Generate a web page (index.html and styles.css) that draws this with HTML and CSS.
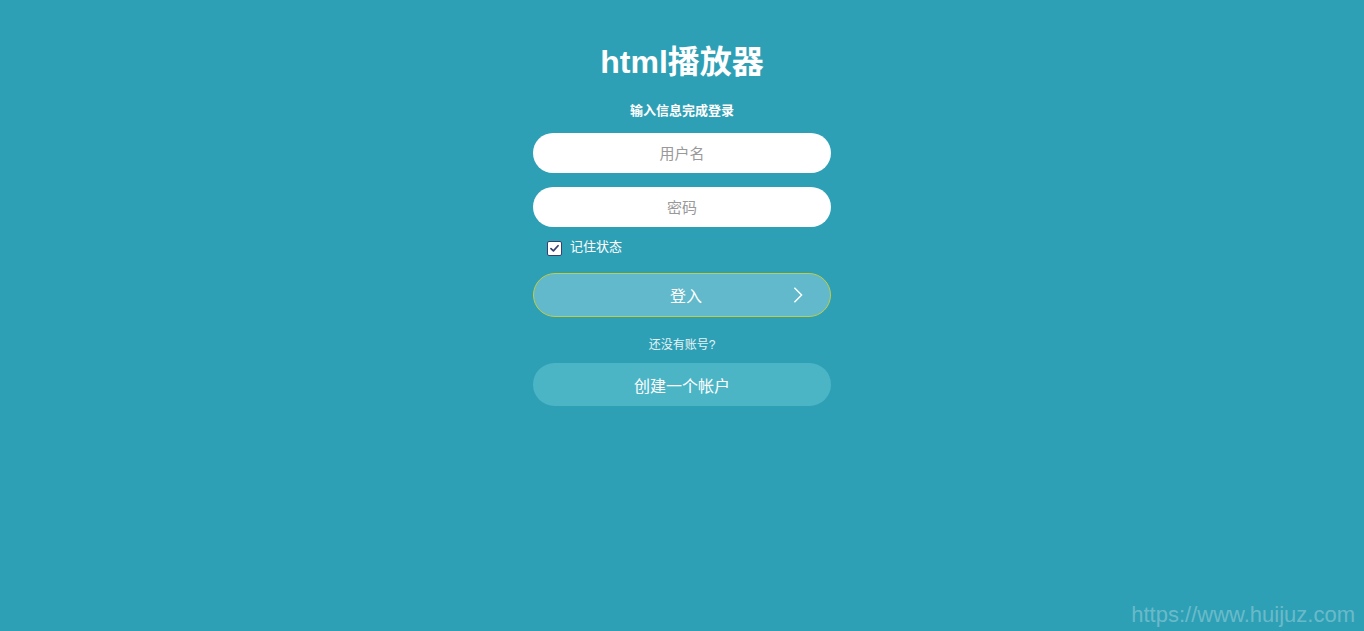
FILE: index.html
```html
<!DOCTYPE html>
<html lang="zh">
<head>
<meta charset="utf-8">
<title>html播放器</title>
<link rel="stylesheet" href="styles.css">
</head>
<body>
<main class="login">
  <h1 class="title">html播放器</h1>
  <p class="subtitle">输入信息完成登录</p>
  <form class="form">
    <input class="field" type="text" placeholder="用户名">
    <input class="field" type="password" placeholder="密码">
    <label class="remember">
      <span class="check"><svg viewBox="0 0 14 14" width="11" height="11"><path d="M2.5 7.2 L5.6 10 L11.5 3.5" fill="none" stroke="#3a3f6e" stroke-width="2.2" stroke-linecap="round" stroke-linejoin="round"/></svg></span>
      <span>记住状态</span>
    </label>
    <button class="btn-login" type="button">
      <span>登入</span>
      <svg class="arrow" viewBox="0 0 12 20" width="12" height="18"><path d="M2 2 L10 10 L2 18" fill="none" stroke="#ffffff" stroke-width="1.6"/></svg>
    </button>
    <p class="noacc">还没有账号?</p>
    <button class="btn-create" type="button">创建一个帐户</button>
  </form>
</main>
<div class="watermark">https://www.huijuz.com</div>
</body>
</html>
```

FILE: styles.css
```css
html, body {
  margin: 0;
  height: 100%;
}
body {
  background: #2ea0b5;
  font-family: "Liberation Sans", Arial, "Noto Sans CJK SC", sans-serif;
  color: #fff;
  overflow: hidden;
}
.login {
  width: 298px;
  margin: 0 auto;
  padding-top: 41px;
  display: flex;
  flex-direction: column;
  align-items: center;
}
.title {
  margin: 0;
  font-size: 32px;
  font-weight: bold;
  line-height: 42px;
  letter-spacing: 0;
}
.subtitle {
  margin: 20px 0 0;
  font-size: 13px;
  font-weight: bold;
  line-height: 16px;
}
.form {
  width: 100%;
  margin-top: 14px;
  display: flex;
  flex-direction: column;
}
.field {
  box-sizing: border-box;
  width: 100%;
  height: 40px;
  border: none;
  border-radius: 20px;
  background: #fff;
  text-align: center;
  font-family: inherit;
  font-size: 15px;
  color: #555;
  outline: none;
  margin-bottom: 14px;
}
.field::placeholder {
  color: #999;
}
.remember {
  display: flex;
  align-items: center;
  gap: 8px;
  padding-left: 14px;
  margin-top: -1px;
  font-size: 13px;
  height: 16px;
  line-height: 16px;
}
.remember span:last-child {
  position: relative;
  top: -1px;
}
.check {
  width: 15px;
  height: 15px;
  background: #fff;
  border-radius: 2px;
  border: 1px solid #3a3f6e;
  box-sizing: border-box;
  display: flex;
  align-items: center;
  justify-content: center;
}
.btn-login {
  position: relative;
  margin-top: 17px;
  height: 44px;
  border-radius: 22px;
  background: #62b9cb;
  border: 1px solid #c3cc45;
  color: #fff;
  font-family: inherit;
  font-size: 16px;
  padding: 0 0 0 8px;
}
.arrow {
  position: absolute;
  right: 26px;
  top: 12px;
}
.noacc {
  margin: 20px 0 0;
  text-align: center;
  font-size: 12px;
  line-height: 16px;
  color: #e6f3f6;
}
.btn-create {
  margin-top: 10px;
  height: 43px;
  border-radius: 22px;
  background: #4bb5c6;
  border: none;
  color: #fff;
  font-family: inherit;
  font-size: 16px;
  padding: 0;
}
.watermark {
  position: absolute;
  right: 9px;
  bottom: 3px;
  font-size: 22px;
  color: rgba(255, 255, 255, 0.3);
  font-family: "Liberation Sans", Arial, sans-serif;
}
```
